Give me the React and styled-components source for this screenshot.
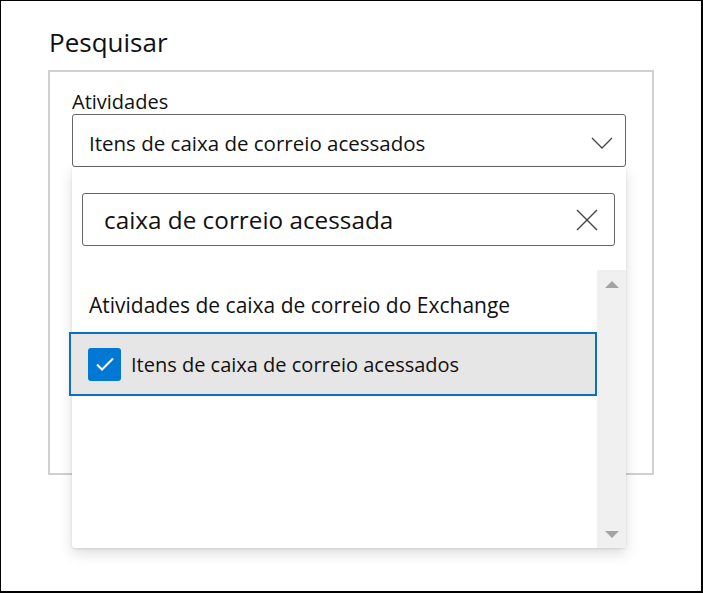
import React from 'react';
import styled, { createGlobalStyle } from 'styled-components';

const GlobalStyle = createGlobalStyle`
  html, body {
    margin: 0;
    padding: 0;
    background: #fff;
  }
  body {
    font-family: 'Open Sans', 'Noto Sans', sans-serif;
    color: #111;
  }
`;

const Frame = styled.div`
  width: 703px;
  height: 593px;
  box-sizing: border-box;
  border-style: solid;
  border-color: #000;
  border-width: 1px 2px 2px 1px;
  padding: 27px 0 0 47px;
`;

const Title = styled.div`
  margin: 0 0 14px 1px;
  font-size: 26px;
  font-weight: 400;
  line-height: 28px;
`;

const Panel = styled.div`
  width: 606px;
  height: 405px;
  box-sizing: border-box;
  border: 2px solid #d0d0d0;
  padding: 17px 0 0 22px;
`;

const Label = styled.div`
  font-size: 20px;
  line-height: 25px;
`;

const SelectWrap = styled.div`
  position: relative;
  width: 554px;
`;

const Select = styled.div`
  height: 53px;
  box-sizing: border-box;
  border: 1px solid #666;
  border-radius: 3px;
  display: flex;
  align-items: center;
  justify-content: space-between;
  padding: 5px 12px 0 16px;
  font-size: 20.5px;
`;

const Dropdown = styled.div`
  position: absolute;
  top: 100%;
  left: 0;
  width: 554px;
  height: 381px;
  background: #fff;
  box-shadow: 0 6px 14px rgba(0, 0, 0, 0.13), 0 1px 3px rgba(0, 0, 0, 0.1);
  border-radius: 0 0 3px 3px;
  display: flex;
  flex-direction: column;
`;

const Search = styled.div`
  margin: 26px 11px 0 10px;
  height: 53px;
  box-sizing: border-box;
  border: 1px solid #666;
  border-radius: 3px;
  display: flex;
  align-items: center;
  justify-content: space-between;
  padding: 0 16px 0 21px;
  font-size: 24.3px;
`;

const ListArea = styled.div`
  flex: 1;
  margin-top: 24px;
  display: flex;
  min-height: 0;
`;

const List = styled.div`
  flex: 1;
  padding-top: 20px;
`;

const GroupHeader = styled.div`
  padding-left: 17px;
  font-size: 21px;
  line-height: 30px;
  margin-bottom: 12px;
`;

const Option = styled.div`
  margin-left: -3px;
  height: 64px;
  box-sizing: border-box;
  border: 2px solid ${(props) => (props.selected ? '#106ebe' : 'transparent')};
  background: ${(props) => (props.selected ? '#e6e6e6' : 'transparent')};
  display: flex;
  align-items: center;
  padding-left: 17px;
  gap: 10px;
  font-size: 20px;
`;

const Check = styled.span`
  width: 33px;
  height: 33px;
  border-radius: 3px;
  background: #0078d4;
  display: flex;
  align-items: center;
  justify-content: center;
  flex-shrink: 0;
`;

const Scrollbar = styled.div`
  width: 29px;
  background: #f0f0f0;
  display: flex;
  flex-direction: column;
  justify-content: space-between;
  align-items: center;
  padding: 11px 0 10px;
`;

const Arrow = styled.span`
  width: 0;
  height: 0;
  border-left: 7px solid transparent;
  border-right: 7px solid transparent;
  ${(props) =>
    props.up
      ? 'border-bottom: 7px solid #a3a3a3;'
      : 'border-top: 7px solid #a3a3a3;'}
`;

const Chevron = () => (
  <svg width="22" height="14" viewBox="0 0 22 14">
    <path d="M1 2 L11 12 L21 2" fill="none" stroke="#444" strokeWidth="1.3" />
  </svg>
);

const Cross = () => (
  <svg width="22" height="22" viewBox="0 0 22 22">
    <path d="M1 1 L21 21 M21 1 L1 21" fill="none" stroke="#444" strokeWidth="1.4" />
  </svg>
);

const Tick = () => (
  <svg width="20" height="16" viewBox="0 0 20 16">
    <path d="M2 8.5 L7 13.5 L18 2.5" fill="none" stroke="#fff" strokeWidth="2" />
  </svg>
);

const App = () => (
  <>
    <GlobalStyle />
    <Frame>
      <Title>Pesquisar</Title>
      <Panel>
        <Label>Atividades</Label>
        <SelectWrap>
          <Select>
            <span>Itens de caixa de correio acessados</span>
            <Chevron />
          </Select>
          <Dropdown>
            <Search>
              <span>caixa de correio acessada</span>
              <Cross />
            </Search>
            <ListArea>
              <List>
                <GroupHeader>Atividades de caixa de correio do Exchange</GroupHeader>
                <Option selected>
                  <Check>
                    <Tick />
                  </Check>
                  Itens de caixa de correio acessados
                </Option>
              </List>
              <Scrollbar>
                <Arrow up />
                <Arrow />
              </Scrollbar>
            </ListArea>
          </Dropdown>
        </SelectWrap>
      </Panel>
    </Frame>
  </>
);

export default App;
